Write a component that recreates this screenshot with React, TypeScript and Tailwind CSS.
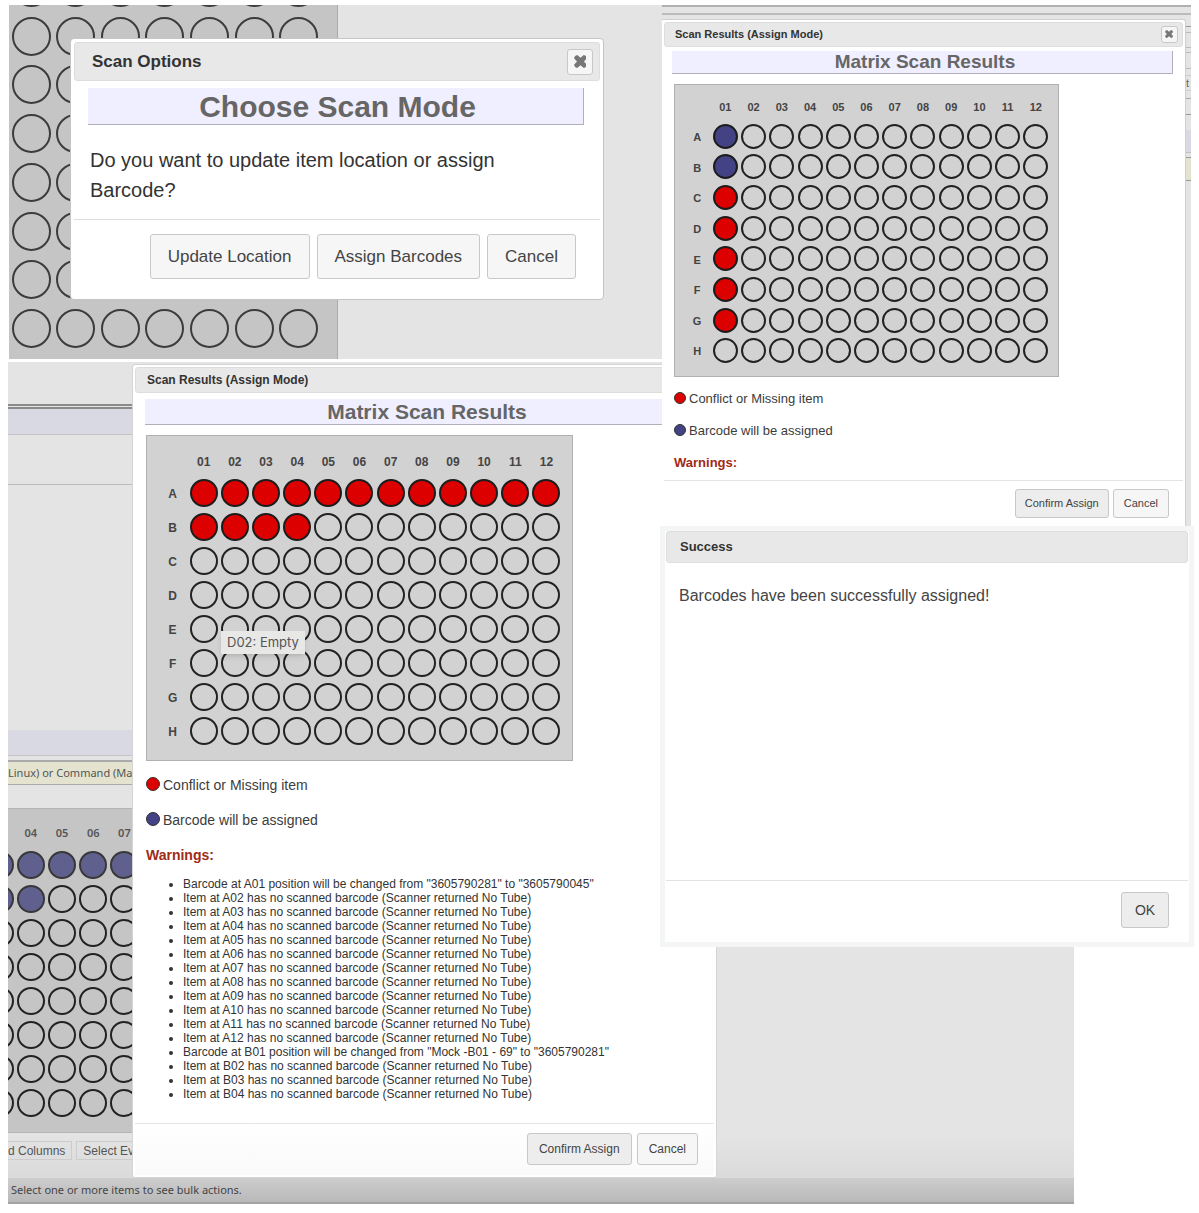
import type { ReactNode } from "react";
import clsx from "clsx";

const ROWS = ["A", "B", "C", "D", "E", "F", "G", "H"];
const COLS = ["01", "02", "03", "04", "05", "06", "07", "08", "09", "10", "11", "12"];

const noTube = (pos: string) => `Item at ${pos} has no scanned barcode (Scanner returned No Tube)`;

const WARNINGS = [
  'Barcode at A01 position will be changed from "3605790281" to "3605790045"',
  ...COLS.slice(1).map((col) => noTube(`A${col}`)),
  'Barcode at B01 position will be changed from "Mock -B01 - 69" to "3605790281"',
  ...["B02", "B03", "B04"].map(noTube),
];

type WellState = "conflict" | "assign" | "selected" | "empty";

const wellColor: Record<WellState, string> = {
  conflict: "bg-[#dc0000] border-[#1c1c1c]",
  assign: "bg-[#424284] border-[#1c1c1c]",
  selected: "bg-[#60608f] border-[#383838]",
  empty: "border-[#222222]",
};

const Well = ({ state, className }: { state: WellState; className: string }) => (
  <span className={clsx("block shrink-0 rounded-full border-2", wellColor[state], className)} />
);

interface PlateProps {
  className: string;
  wellClass: string;
  getState: (row: string, col: number) => WellState;
}

const Plate = ({ className, wellClass, getState }: PlateProps) => (
  <table
    className={clsx(
      "grid grid-cols-[repeat(13,minmax(0,1fr))] border border-[#b0b0b0] bg-[#d2d2d2] text-[#444]",
      className
    )}
  >
    <thead className="contents">
      <tr className="contents">
        <td />
        {COLS.map((col) => (
          <th key={col} scope="col" className="flex items-center justify-center">
            {col}
          </th>
        ))}
      </tr>
    </thead>
    <tbody className="contents">
      {ROWS.map((row) => (
        <tr key={row} className="contents">
          <th scope="row" className="flex items-center justify-center pt-0.5">
            {row}
          </th>
          {COLS.map((col, i) => (
            <td key={col} className="flex items-center justify-center">
              <Well state={getState(row, i + 1)} className={wellClass} />
            </td>
          ))}
        </tr>
      ))}
    </tbody>
  </table>
);

const Button = ({ children, className }: { children: ReactNode; className: string }) => (
  <button type="button" className={clsx("rounded-[3px] border border-[#c8c8c8] text-[#444]", className)}>
    {children}
  </button>
);

const CloseButton = ({ className }: { className: string }) => (
  <button
    type="button"
    aria-label="Close"
    className={clsx(
      "flex items-center justify-center rounded-[3px] border border-[#c8c8c8] bg-[#f6f6f6] text-[#777]",
      className
    )}
  >
    <svg viewBox="0 0 12 12" className="size-[54%]" fill="currentColor">
      <path d="M3 0 L6 2.6 L9 0 Q11.6 0.4 12 3 L9.2 6 L12 9 Q11.6 11.6 9 12 L6 9.4 L3 12 Q0.4 11.6 0 9 L2.8 6 L0 3 Q0.4 0.4 3 0 Z" />
    </svg>
  </button>
);

const TitleBar = ({ title, className, children }: { title: string; className: string; children?: ReactNode }) => (
  <div
    className={clsx(
      "flex items-center justify-between rounded-[3px] border border-[#dddddd] bg-[#e8e8e8] font-bold text-[#333]",
      className
    )}
  >
    <span>{title}</span>
    {children}
  </div>
);

const Heading = ({ children, className }: { children: ReactNode; className: string }) => (
  <h2
    className={clsx(
      "flex items-center justify-center border-r border-b border-[#b0b0b8] bg-[#f0efff] font-bold text-[#666]",
      className
    )}
  >
    {children}
  </h2>
);

const Legend = ({ className, dotClass }: { className: string; dotClass: string }) => (
  <div className={clsx("text-[#3c3c3c]", className)}>
    <p className="flex items-center gap-[3px]">
      <span className={clsx("mb-[3px] rounded-full border border-[#333] bg-[#dc0000]", dotClass)} />
      Conflict or Missing item
    </p>
    <p className="flex items-center gap-[3px]">
      <span className={clsx("mb-[3px] rounded-full border border-[#333] bg-[#424284]", dotClass)} />
      Barcode will be assigned
    </p>
    <p className="font-bold text-[#9f2b17]">Warnings:</p>
  </div>
);

const ScanOptions = () => (
  <section className="flex h-[354px] items-start overflow-hidden bg-[#e4e4e4] -mr-0.5 ml-px">
    <div className="flex h-full w-[329px] shrink-0 flex-col justify-end border-r border-[#aaa] bg-[#c5c5c5] pb-1.5">
      <div className="grid h-[390px] w-[312px] shrink-0 grid-cols-7 grid-rows-8 place-items-center">
        {Array.from({ length: 56 }, (_, i) => (
          <span key={i} className="size-[39px] rounded-full border-2 border-[#3c3c3c]" />
        ))}
      </div>
    </div>
    <div
      role="dialog"
      aria-label="Scan Options"
      className="z-10 mt-[33px] -ml-[268px] w-[534px] shrink-0 rounded-[4px] border border-[#c5c5c5] bg-white p-[3px] text-[17px]"
    >
      <TitleBar title="Scan Options" className="h-[39px] pr-1.5 pl-[17px]">
        <CloseButton className="size-[26px]" />
      </TitleBar>
      <Heading className="mr-4 ml-3.5 mt-[7px] h-[37px] pl-1 text-[30px]">Choose Scan Mode</Heading>
      <p className="px-4 pt-5 pb-3.5 text-[20px] leading-[30px] text-[#333]">
        Do you want to update item location or assign Barcode?
      </p>
      <div className="flex justify-end gap-[7px] border-t border-[#ddd] px-6 pt-3.5 pb-[17px]">
        <Button className="h-[45px] bg-[#f6f6f6] px-[17px]">Update Location</Button>
        <Button className="h-[45px] bg-[#f6f6f6] px-[17px]">Assign Barcodes</Button>
        <Button className="h-[45px] bg-[#f6f6f6] px-[17px]">Cancel</Button>
      </div>
    </div>
  </section>
);

// Slice of the page that stays visible to the right of the dialog
const PageEdge = () => (
  <div className="w-[5px] shrink-0 overflow-hidden text-[11px] text-[#666]" aria-hidden="true">
    <div className="h-2 border-b border-[#999]" />
    <div className="h-1.5 border-b border-[#bbb]" />
    <div className="h-[15px] border-b border-[#bbb]" />
    <div className="h-[5px] border-b border-[#bbb]" />
    <div className="h-4 border-b border-[#bbb]" />
    <div className="h-[7px] border-b border-[#ccc]" />
    <div className="h-[15px] border-b border-[#ccc] leading-[15px]">t</div>
    <div className="h-2 border-b border-[#aaa]" />
    <div className="h-4 border-b border-[#999]" />
    <div className="mt-[15px] h-[23px] border-b border-[#c0c0c8] bg-[#d9d9e4]" />
    <div className="mt-1 h-6 border-y border-[#999] bg-[#e3e3cf]" />
  </div>
);

const SmallScanResults = () => (
  <section className="mr-[3px] ml-0.5 border-t-2 border-[#b0b0b0] bg-[#e4e4e4]">
    <div className="h-2 border-b-2 border-[#bbb]" />
    <div className="flex pt-1">
      <div
        role="dialog"
        aria-label="Scan Results"
        className="min-w-0 flex-1 rounded-tr-[3px] border-t border-r border-[#d0d0d0] bg-white pt-0.5 pb-2 text-[11px]"
      >
        <TitleBar title="Scan Results (Assign Mode)" className="mx-0.5 h-[25px] pr-1 pl-2.5">
          <CloseButton className="size-[17px]" />
        </TitleBar>
        <Heading className="mr-3 ml-2.5 mt-1 h-[23px] pl-1.5 text-[19px]">Matrix Scan Results</Heading>
        <div className="pt-2.5 pl-3">
          <Plate
            className="h-[293px] w-[385px] grid-rows-[28px_repeat(8,minmax(0,1fr))] px-2 pt-2 pb-2.5 text-[11px]"
            wellClass="size-[25px]"
            getState={(row, col) => {
              if (col > 1 || row === "H") return "empty";
              return row < "C" ? "assign" : "conflict";
            }}
          />
          <Legend className="pt-1.5 pb-px text-[13px] leading-8" dotClass="size-3" />
        </div>
        <div className="mx-0.5 flex justify-end gap-1 border-t border-[#e4e4e4] pt-2 pr-3.5">
          <Button className="h-[29px] bg-[#ededed] px-[9px]">Confirm Assign</Button>
          <Button className="h-[29px] bg-[#f6f6f6] px-2.5">Cancel</Button>
        </div>
      </div>
      <PageEdge />
    </div>
  </section>
);

const SuccessDialog = () => (
  <section role="dialog" aria-label="Success" className="border-[5px] border-[#f4f6f6] bg-white">
    <TitleBar title="Success" className="mx-px h-8 px-[13px] text-[13px]" />
    <p className="h-[317px] px-3.5 pt-[21px] text-[16px] leading-6 text-[#444]">
      Barcodes have been successfully assigned!
    </p>
    <div className="mx-px flex justify-end border-t border-[#e2e2e2] pt-[11px] pr-[19px] pb-3.5">
      <Button className="h-9 w-12 bg-[#ededed] text-[14px]">OK</Button>
    </div>
  </section>
);

const ItemsPage = () => (
  <div className="flex w-[124px] shrink-0 flex-col overflow-hidden font-['Noto_Sans','Open_Sans',sans-serif] text-[11px] whitespace-nowrap text-[#555]">
    <div className="mt-[42px] h-[5px] border-y-2 border-[#8a8a8a]" />
    <div className="h-[26px] border-b border-[#c4c4c4] bg-[#d9d9e4]" />
    <div className="h-[50px] border-b border-[#bbb]" />
    <div className="flex-1" />
    <div className="h-[26px] border-b border-[#c4c4c4] bg-[#d9d9e4]" />
    <div className="mt-1 flex h-[25px] items-center border-t-2 border-b border-[#aaa] bg-[#e3e3cf]">
      Linux) or Command (Ma
    </div>
    <div className="mt-[23px] flex h-[325px] justify-end border-y border-[#b4b4b4] bg-[#c5c5c5] pt-2.5 pb-3">
      <div className="-mr-2 grid w-[156px] shrink-0 grid-cols-5 grid-rows-[29px_repeat(8,minmax(0,1fr))] place-items-center">
        <span />
        {COLS.slice(3, 7).map((col) => (
          <span key={col} className="font-semibold">
            {col}
          </span>
        ))}
        {Array.from({ length: 40 }, (_, i) => (
          <Well key={i} state={i < 7 ? "selected" : "empty"} className="size-7 border-[#3c3c3c]" />
        ))}
      </div>
    </div>
    <div className="flex gap-1 bg-gradient-to-b from-[#e4e4e4] to-[#dadada] pt-2 pb-[18px] font-['Liberation_Sans',Arial,sans-serif] text-[12px]">
      <button type="button" className="h-[19px] shrink-0 border border-l-0 border-[#ccc] pr-1.5 leading-none">
        d Columns
      </button>
      <button type="button" className="h-[19px] flex-1 border border-r-0 border-[#ccc] pl-1.5 text-left leading-none">
        Select Ev
      </button>
    </div>
  </div>
);

const LargeScanResults = () => (
  <div
    role="dialog"
    aria-label="Scan Results"
    className="mt-0.5 w-[585px] shrink-0 rounded-[3px] border border-[#d4d4d4] bg-white p-0.5 text-[12px]"
  >
    <TitleBar title="Scan Results (Assign Mode)" className="h-[26px] px-[11px]" />
    <Heading className="mr-1 ml-2.5 mt-1.5 h-[26px] text-[21px]">Matrix Scan Results</Heading>
    <div className="relative pt-2.5 pl-[11px]">
      <Plate
        className="h-[326px] w-[427px] grid-rows-[28px_repeat(8,minmax(0,1fr))] px-2.5 pt-3 pb-3 text-[12px]"
        wellClass="size-7"
        getState={(row, col) => (row === "A" || (row === "B" && col <= 4) ? "conflict" : "empty")}
      />
      <div
        role="tooltip"
        className="absolute top-[206px] left-[86px] flex h-[23px] items-center bg-[#e8e8e6] px-1.5 font-[Inter,sans-serif] text-[13px] text-[#555] shadow-md"
      >
        D02: Empty
      </div>
      <Legend className="pt-[7px] text-[14px] leading-[35px]" dotClass="size-3.5" />
      <ul className="list-disc pt-1 pb-[22px] pl-[37px] leading-[14px] text-[#333]">
        {WARNINGS.map((warning) => (
          <li key={warning}>{warning}</li>
        ))}
      </ul>
    </div>
    <div className="flex justify-end gap-[5px] border-t border-[#e4e4e4] bg-gradient-to-b from-white to-[#fafafa] pt-[9px] pr-4 pb-2.5">
      <Button className="h-8 bg-[#ededed] px-[11px]">Confirm Assign</Button>
      <Button className="h-8 bg-[#f6f6f6] px-[11px]">Cancel</Button>
    </div>
  </div>
);

const App = () => {
  return (
    <main className="grid min-h-screen grid-cols-[652fr_534fr] content-start items-start gap-y-[3px] bg-white pt-[5px] pr-[5px] pl-2 font-['Liberation_Sans',Arial,sans-serif]">
      <ScanOptions />

      <div className="z-10 col-start-2 row-span-2 row-start-1">
        <SmallScanResults />
        <SuccessDialog />
      </div>

      <section className="col-span-2 col-start-1 row-start-2 mr-[120px] bg-[#e4e4e4]">
        <div className="flex bg-gradient-to-b from-[#e4e4e4] from-95% to-[#dadada]">
          <ItemsPage />
          <LargeScanResults />
        </div>
        <footer className="h-[26px] border-b-2 border-[#a4a4a4] bg-gradient-to-b from-[#cdcdcd] to-[#b9b9b9] pl-[3px] font-['Noto_Sans','Open_Sans',sans-serif] text-[11px] leading-6 text-[#444]">
          Select one or more items to see bulk actions.
        </footer>
      </section>
    </main>
  );
};

export default App;
